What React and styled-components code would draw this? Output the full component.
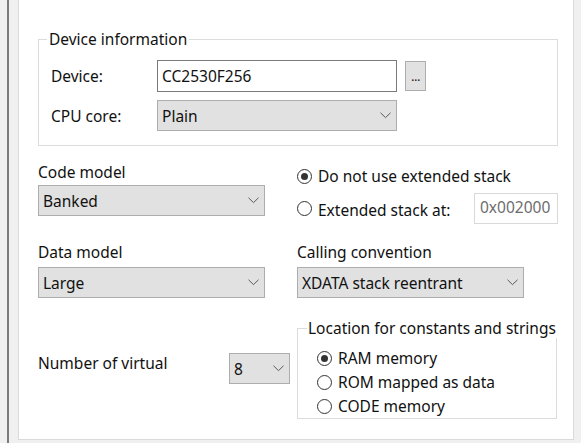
import React from "react";
import styled, { createGlobalStyle } from "styled-components";

const Global = createGlobalStyle`
  html, body { margin: 0; padding: 0; background: #f0f0f0; }
  body {
    font-family: "Noto Sans", "Liberation Sans", sans-serif;
    font-size: 15.5px;
    line-height: 20px;
    color: #111;
  }
  * { box-sizing: border-box; }
`;

const Page = styled.div`
  display: flex;
  width: 581px;
  height: 443px;
  overflow: hidden;
  background: #f0f0f0;
`;

const Rail = styled.div`
  width: 11px;
  margin-left: 7px;
  border-left: 2px solid #7c7c7c;
  flex: none;
`;

const Panel = styled.div`
  width: 556px;
  height: 440px;
  flex: none;
  background: #fff;
  border: 1px solid #dadada;
  border-top: none;
  padding: 29px 15px 0 19px;
`;

const Group = styled.fieldset`
  margin: 0;
  min-width: 0;
  border: 1px solid #dcdcdc;
  padding: ${(p) => p.$pad};
`;

const Legend = styled.legend`
  padding: 0 ${(p) => p.$padx}px;
  margin-left: ${(p) => p.$shift}px;
  line-height: 20px;
  white-space: nowrap;
`;

const FormRow = styled.div`
  display: flex;
  align-items: center;
  height: ${(p) => p.$h}px;
  margin-top: ${(p) => p.$mt || 0}px;
`;

const RowLabel = styled.span`
  width: ${(p) => p.$w}px;
  flex: none;
`;

const TextBox = styled.div`
  width: ${(p) => p.$w}px;
  height: ${(p) => p.$h}px;
  border: 1px solid ${(p) => (p.$disabled ? "#d9d9d9" : "#7a7a7a")};
  background: #fff;
  color: ${(p) => (p.$disabled ? "#6d6d6d" : "#111")};
  padding: ${(p) => (p.$disabled ? "3px 0 0 5px" : "0 0 0 4px")};
  display: flex;
  align-items: ${(p) => (p.$disabled ? "flex-start" : "center")};
  flex: none;
`;

const BrowseButton = styled.div`
  width: 21px;
  height: 30px;
  margin-left: 8px;
  background: #e1e1e1;
  border: 1px solid #adadad;
  display: flex;
  align-items: flex-end;
  justify-content: center;
  padding-bottom: 7px;
  font-size: 13px;
  line-height: 13px;
  color: #222;
  letter-spacing: -0.5px;
  flex: none;
`;

const SelectBox = styled.div`
  width: ${(p) => p.$w}px;
  height: ${(p) => p.$h || 31}px;
  background: #e1e1e1;
  border: 1px solid #adadad;
  display: flex;
  align-items: center;
  justify-content: space-between;
  padding: 0 5px 0 4px;
  flex: none;
`;

const Chevron = () => (
  <svg width="11" height="7" viewBox="0 0 11 7">
    <path d="M0.5 0.8 L5.5 5.6 L10.5 0.8" fill="none" stroke="#5a5a5a" strokeWidth="1" />
  </svg>
);

const Select = ({ w, h, children }) => (
  <SelectBox $w={w} $h={h}>
    <span>{children}</span>
    <Chevron />
  </SelectBox>
);

const Grid = styled.div`
  display: grid;
  grid-template-columns: 259px 1fr;
  row-gap: 18px;
  margin-top: 16px;
`;

const Field = styled.div`
  display: flex;
  flex-direction: column;
  gap: ${(p) => p.$gap}px;
`;

const RadioStack = styled.div`
  display: flex;
  flex-direction: column;
  padding-top: 4px;
  gap: 7px;
`;

const RadioRow = styled.div`
  display: flex;
  align-items: center;
  height: ${(p) => p.$h || 20}px;
`;

const RadioDot = styled.span`
  width: 15px;
  height: 15px;
  border-radius: 50%;
  border: 1px solid #333;
  background: #fff;
  margin-right: 6px;
  flex: none;
  display: flex;
  align-items: center;
  justify-content: center;
  &::after {
    content: "";
    width: 7px;
    height: 7px;
    border-radius: 50%;
    background: ${(p) => (p.$on ? "#333" : "transparent")};
  }
`;

const RadioText = styled.span`
  padding-top: ${(p) => p.$pt || 0}px;
  width: ${(p) => (p.$w ? `${p.$w}px` : "auto")};
  flex: none;
`;

const Radio = ({ on, children, w, pt }) => (
  <>
    <RadioDot $on={on} />
    <RadioText $w={w} $pt={pt}>{children}</RadioText>
  </>
);

const VirtualCell = styled.div`
  display: flex;
  align-items: flex-start;
  align-self: center;
  margin-top: 2px;
`;

const LocationGroup = styled(Group)`
  margin-top: 2px;
  width: 260px;
`;

const RadioList = styled.div`
  display: flex;
  flex-direction: column;
  margin-left: 9px;
`;

export default function App() {
  return (
    <>
      <Global />
      <Page>
        <Rail />
        <Panel>
          <Group $pad="11px 12px 14px 12px">
            <Legend $shift={-4} $padx={2}>Device information</Legend>
            <FormRow $h={32}>
              <RowLabel $w={106}>Device:</RowLabel>
              <TextBox $w={240} $h={32}>CC2530F256</TextBox>
              <BrowseButton>...</BrowseButton>
            </FormRow>
            <FormRow $h={31} $mt={8}>
              <RowLabel $w={106}>CPU core:</RowLabel>
              <Select w={240}>Plain</Select>
            </FormRow>
          </Group>

          <Grid>
            <Field $gap={3}>
              <span>Code model</span>
              <Select w={227}>Banked</Select>
            </Field>
            <RadioStack>
              <RadioRow>
                <Radio on>Do not use extended stack</Radio>
              </RadioRow>
              <RadioRow $h={31}>
                <Radio w={156} pt={3}>Extended stack at:</Radio>
                <TextBox $w={84} $h={31} $disabled>0x002000</TextBox>
              </RadioRow>
            </RadioStack>

            <Field $gap={5}>
              <span>Data model</span>
              <Select w={227}>Large</Select>
            </Field>
            <Field $gap={5}>
              <span>Calling convention</span>
              <Select w={227}>XDATA stack reentrant</Select>
            </Field>

            <VirtualCell>
              <RowLabel $w={191}>Number of virtual</RowLabel>
              <Select w={61}>8</Select>
            </VirtualCell>
            <LocationGroup $pad="8px 0 0 10px">
              <Legend $shift={-1} $padx={1}>Location for constants and strings</Legend>
              <RadioList>
                <RadioRow $h={24}>
                  <Radio on>RAM memory</Radio>
                </RadioRow>
                <RadioRow $h={24}>
                  <Radio>ROM mapped as data</Radio>
                </RadioRow>
                <RadioRow $h={24}>
                  <Radio>CODE memory</Radio>
                </RadioRow>
              </RadioList>
            </LocationGroup>
          </Grid>
        </Panel>
      </Page>
    </>
  );
}
